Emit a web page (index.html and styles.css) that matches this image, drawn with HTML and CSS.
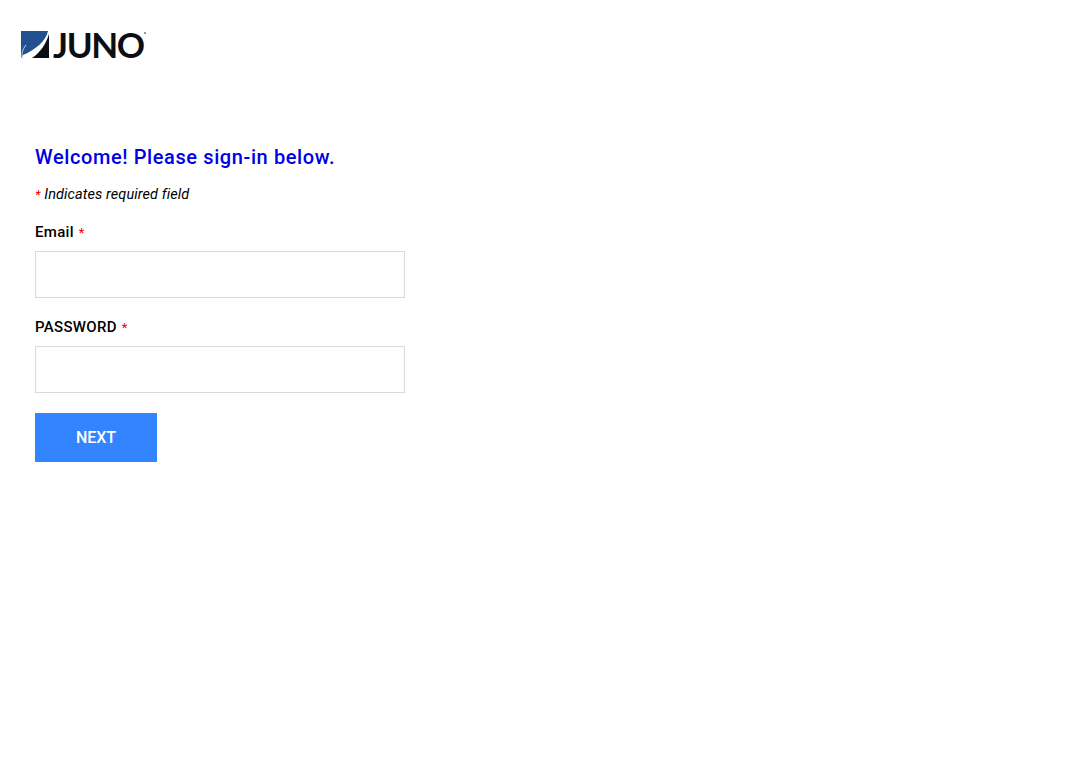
FILE: index.html
```html
<!DOCTYPE html>
<html lang="en">
<head>
    <meta charset="UTF-8">
    <meta name="viewport" content="width=device-width, initial-scale=1.0">
    <title>Juno Sign In</title>
    <link rel="stylesheet" href="styles.css">
</head>
<body>
    <header class="site-header">
        <div class="logo">
            <svg class="logo-mark" width="29" height="30" viewBox="0 0 29 30">
                <path d="M1 1H28C26 11 15 20 3 25L1 28Z" fill="#23518f"/>
                <path d="M29 4V28H12C20 23 26 14 29 4Z" fill="#0d0d14"/>
                <path d="M3 29C1 25 2 20 6 15" fill="none" stroke="#c9d6e6" stroke-width="1"/>
            </svg>
            <span class="logo-text">JUNO</span>
            <span class="logo-reg"></span>
        </div>
    </header>

    <main class="signin">
        <h1>Welcome! Please sign-in below.</h1>
        <p class="required-note"><span class="star">*</span> Indicates required field</p>

        <form>
            <div class="field">
                <label for="email">Email <span class="star">*</span></label>
                <input type="text" id="email">
            </div>
            <div class="field">
                <label for="password">PASSWORD <span class="star">*</span></label>
                <input type="password" id="password">
            </div>
            <button type="button">NEXT</button>
        </form>
    </main>
</body>
</html>
```

FILE: styles.css
```css
body {
    margin: 0;
    padding: 0;
    background-color: #ffffff;
    font-family: "Roboto", "Noto Sans", sans-serif;
    color: #000000;
}

.site-header {
    padding: 30px 0 0 20px;
    height: 60px;
}

.logo {
    display: flex;
    align-items: flex-start;
}

.logo-mark {
    display: block;
    flex-shrink: 0;
}

.logo-text {
    margin-left: 4px;
    font-family: "Lato", sans-serif;
    font-size: 35px;
    line-height: 29px;
    font-weight: 700;
    letter-spacing: -1.4px;
    color: #0d0d14;
}

.logo-reg {
    width: 2px;
    height: 2px;
    margin-top: 2px;
    background-color: #777777;
    border-radius: 50%;
}

.signin {
    width: 370px;
    padding: 54px 0 0 35px;
}

h1 {
    margin: 0;
    font-size: 20px;
    line-height: 26px;
    font-weight: 500;
    letter-spacing: 0.6px;
    color: #0000e6;
}

.required-note {
    margin: 16px 0 0;
    font-size: 14.5px;
    line-height: 18px;
    font-style: italic;
    letter-spacing: 0.1px;
}

.star {
    color: #f00000;
    font-size: 13px;
    font-weight: 400;
}

.field {
    margin-bottom: 20px;
}

.field:first-child {
    margin-top: 19px;
}

label {
    display: block;
    margin-bottom: 9px;
    font-size: 15px;
    line-height: 19px;
    font-weight: 500;
    letter-spacing: 0.3px;
    word-spacing: 1px;
}

input {
    display: block;
    box-sizing: border-box;
    width: 100%;
    height: 47px;
    padding: 0 12px;
    border: 1px solid #d9d9d9;
    background-color: #ffffff;
}

button {
    display: block;
    width: 122px;
    height: 49px;
    padding: 0;
    border: none;
    background-color: #3385ff;
    color: #ffffff;
    font-family: inherit;
    font-size: 16px;
    font-weight: 500;
    cursor: pointer;
}
```
